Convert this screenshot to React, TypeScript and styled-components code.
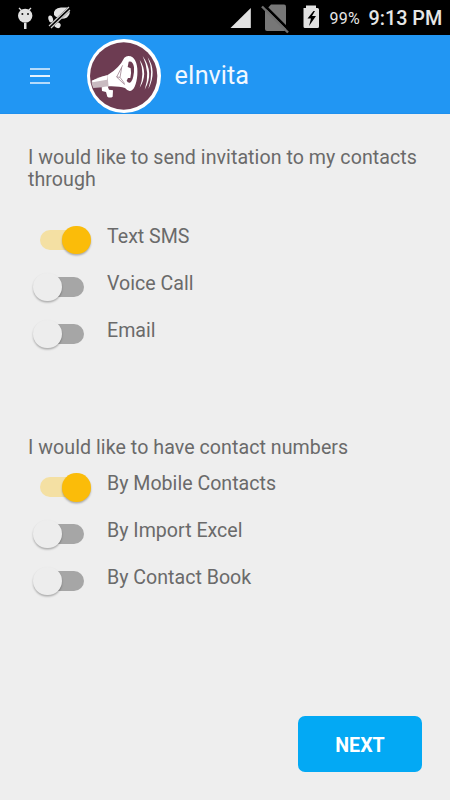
import React from "react";
import styled, { createGlobalStyle } from "styled-components";

const GlobalStyle = createGlobalStyle`
  body { margin: 0; background: #eeeeee; font-family: Roboto, sans-serif; }
  * { box-sizing: border-box; }
`;

const Screen = styled.div`
  width: 450px;
  height: 800px;
  display: flex;
  flex-direction: column;
  overflow: hidden;
  background: #eeeeee;
  color: #6a6a6a;
`;

const StatusBar = styled.header`
  height: 35px;
  flex: none;
  display: flex;
  align-items: flex-start;
  background: #000;
  color: #e6e6e6;
`;

const StatusIcons = styled.svg`
  display: block;
  flex: none;
`;

const Battery = styled.span`
  width: 39px;
  padding-top: 9px;
  font-size: 16px;
  letter-spacing: 0.2px;
  line-height: 20px;
  white-space: nowrap;
`;

const Clock = styled.span`
  padding-top: 7px;
  font-size: 19.8px;
  font-weight: 500;
  line-height: 24px;
  white-space: nowrap;
`;

const AppBar = styled.nav`
  height: 79px;
  flex: none;
  display: flex;
  align-items: center;
  padding-left: 30px;
  background: #2196f3;
  border-bottom: 1px solid #1e90ee;
`;

const MenuButton = styled.button`
  display: flex;
  flex-direction: column;
  gap: 5px;
  width: 20px;
  margin: 3px 37px 0 0;
  padding: 0;
  border: 0;
  background: none;
`;

const MenuLine = styled.span<{ $bright?: boolean }>`
  height: 2px;
  background: ${(p) => (p.$bright ? "#e4f2fe" : "#b5dbfb")};
`;

const LogoMark = styled.svg`
  display: block;
  flex: none;
  margin-top: 3px;
`;

const Title = styled.h1`
  margin: 4px 0 0 13.5px;
  color: #f1f8ff;
  font-size: 25.2px;
  font-weight: 400;
  line-height: 30px;
`;

const Content = styled.main`
  flex: 1;
  display: flex;
  flex-direction: column;
  padding: 32px 28px 28px;
`;

const Group = styled.section<{ $height: number; $gap: number }>`
  height: ${(p) => p.$height}px;
  display: flex;
  flex-direction: column;
  gap: ${(p) => p.$gap}px;
`;

const Question = styled.p`
  margin: 0;
  padding-top: 1px;
  font-size: 19.6px;
  letter-spacing: 0.06px;
  line-height: 22.4px;
  white-space: pre-line;
`;

const Option = styled.label`
  height: 46.9px;
  display: flex;
  align-items: flex-start;
  font-size: 19.6px;
  line-height: 24px;
`;

const Track = styled.span<{ $on: boolean }>`
  width: 43.5px;
  height: 20px;
  margin: 5.4px 23.5px 0 12px;
  flex: none;
  display: flex;
  align-items: center;
  justify-content: ${(p) => (p.$on ? "flex-end" : "flex-start")};
  border-radius: 10px;
  background: ${(p) => (p.$on ? "#f4e0a3" : "#a6a6a6")};
`;

const Thumb = styled.span<{ $on: boolean }>`
  width: 28.5px;
  height: 28.5px;
  margin: 0 -7px;
  flex: none;
  border-radius: 50%;
  background: ${(p) => (p.$on ? "#fbbc09" : "#ededed")};
  box-shadow: 0 1.5px 2px rgba(0, 0, 0, 0.28);
`;

const NextButton = styled.button`
  width: 124px;
  height: 56px;
  margin-top: auto;
  align-self: flex-end;
  padding: 3px 0 0;
  border: 0;
  border-radius: 7px;
  background: #03a9f4;
  color: #fff;
  font: 700 19.6px/24px Roboto, sans-serif;
`;

const Logo = () => (
  <LogoMark width="74" height="74" viewBox="22 12 222 222">
    <circle cx="133" cy="123" r="111" fill="#fff" />
    <circle cx="132" cy="123" r="101" fill="#6d3c52" />
    <path d="M36 138Q58 125 86 121L87 155L41 159Q34 148 36 138Z" fill="#c9bbc1" />
    <path d="M36 137Q60 126 84 120L82 134L39 142Z" fill="#fff" />
    <path d="M66 157L84 154L88 164L100 166L99 185Q91 190 83 185L79 171L67 168Z" fill="#fff" />
    <path d="M84 120Q119 99 134 68Q142 60 153 64C169 69 175 95 173 119C171 147 162 168 150 168Q144 168 136 159Q119 153 86 154Z" fill="#fff" />
    <path d="M147 80Q160 77 163 97Q164 109 161 124Q158 139 151 143Q144 144 141 137L145 129L152 129Q156 114 153 100L144 96Z" fill="#6d3c52" />
    <path d="M129 91L111 126L135 149M111 126L121 127L126 98M121 127L135 146" fill="none" stroke="#8a6878" strokeWidth="2" />
    <g fill="#fff">
      <path d="M180 74Q207 115 180 158Q196 115 180 74Z" />
      <path d="M189 63Q225 114 195 164Q213 114 189 63Z" />
      <path d="M204 67Q233 110 206 162Q224 110 204 67Z" />
    </g>
  </LogoMark>
);

type OptionRowProps = { label: string; on?: boolean };

const OptionRow = ({ label, on = false }: OptionRowProps) => (
  <Option>
    <Track $on={on}>
      <Thumb $on={on} />
    </Track>
    {label}
  </Option>
);

export default function App() {
  return (
    <Screen>
      <GlobalStyle />
      <StatusBar>
        <StatusIcons width="329.5" height="35" viewBox="0 0 329.5 35">
          <g fill="#e2e2e2">
            <path d="M19 8L22 11M31 8L28 11" stroke="#e2e2e2" strokeWidth="1.3" />
            <ellipse cx="25.2" cy="15.8" rx="7.2" ry="7" />
            <rect x="24" y="23" width="2.5" height="6" />
            <circle cx="22.4" cy="14" r="1" fill="#111" />
            <circle cx="28" cy="14" r="1" fill="#111" />
            <path d="M54 15Q53 8 61 7.5H68Q72 13 67 17.5Q60 21 54 15Z" />
            <ellipse cx="50.7" cy="19" rx="2.3" ry="3.5" transform="rotate(-15 50.7 19)" />
            <ellipse cx="57.5" cy="25.2" rx="3.2" ry="2.8" transform="rotate(20 57.5 25.2)" />
            <path d="M50 27L69.5 8.5" stroke="#000" strokeWidth="4" />
            <path d="M49 26L69 7M51 28L70 10" stroke="#ccc" strokeWidth="1.2" />
            <path d="M230.5 28L250.8 8V28Z" />
            <path d="M303.5 8H306V5.5H316V8H317.5Q319 8 319 9.5V26.5Q319 28 317.5 28H305Q303.5 28 303.5 26.5Z" />
            <path d="M313.5 11L307.5 18.5H311L309 26L316 16H312L315 11Z" fill="#000" />
          </g>
          <path d="M271 4.5H284Q286 4.5 286 6.5V29Q286 31 284 31H267Q265 31 265 29V11Z" fill="#777" />
          <path d="M264 5L290 31" stroke="#000" strokeWidth="2.5" />
          <path d="M262 6.5L288 32.5" stroke="#707070" strokeWidth="2.4" />
        </StatusIcons>
        <Battery>99%</Battery>
        <Clock>9:13 PM</Clock>
      </StatusBar>
      <AppBar>
        <MenuButton aria-label="Menu">
          <MenuLine />
          <MenuLine $bright />
          <MenuLine />
        </MenuButton>
        <Logo />
        <Title>eInvita</Title>
      </AppBar>
      <Content>
        <Group $height={289.5} $gap={33}>
          <Question>{"I would like to send invitation to my contacts\nthrough"}</Question>
          <div>
            <OptionRow label="Text SMS" on />
            <OptionRow label="Voice Call" />
            <OptionRow label="Email" />
          </div>
        </Group>
        <Group $height={190} $gap={13}>
          <Question>I would like to have contact numbers</Question>
          <div>
            <OptionRow label="By Mobile Contacts" on />
            <OptionRow label="By Import Excel" />
            <OptionRow label="By Contact Book" />
          </div>
        </Group>
        <NextButton>NEXT</NextButton>
      </Content>
    </Screen>
  );
}
